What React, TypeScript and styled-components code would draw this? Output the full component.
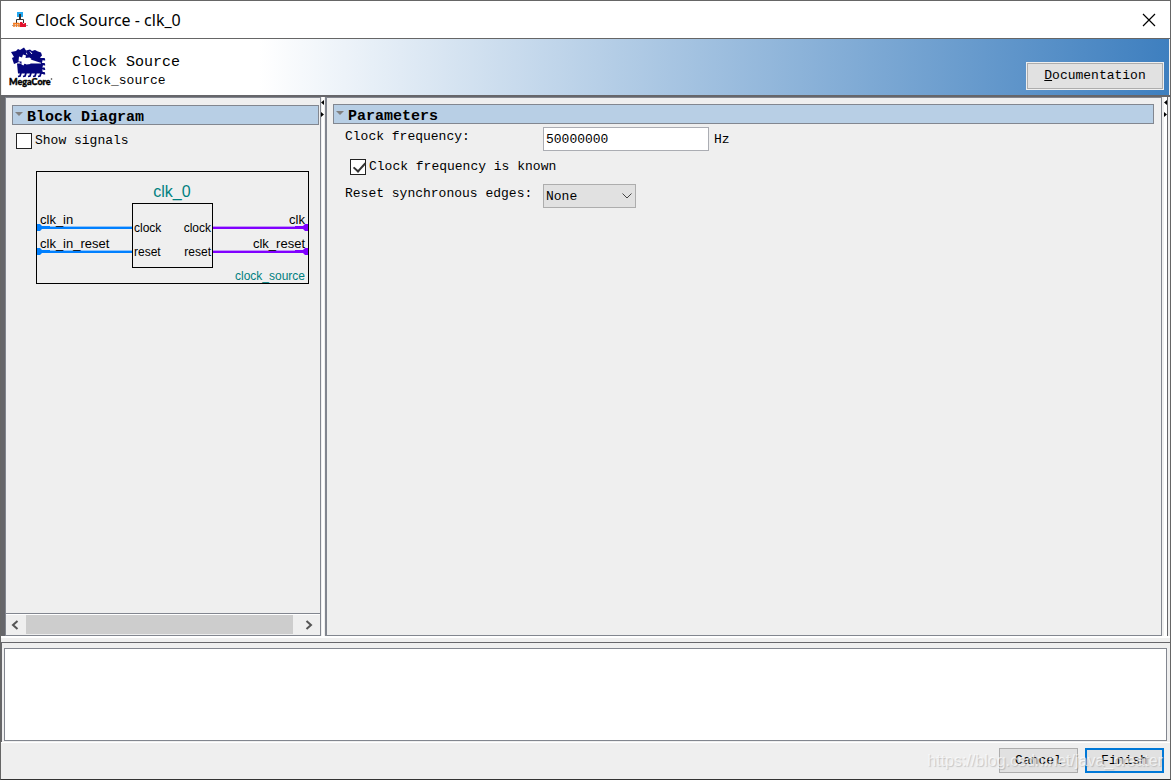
import React from "react";
import styled, { createGlobalStyle } from "styled-components";

const mono = '"Liberation Mono", "DejaVu Sans Mono", monospace';
const edge = "#82868f";
const face = "#efefef";
const dark = "#66666a";

const GlobalStyle = createGlobalStyle`
  * { box-sizing: border-box; }
  body { margin: 0; background: ${face}; }
  button, input, select, textarea { font: inherit; color: inherit; }
`;

const Window = styled.div`
  position: relative;
  display: flex;
  flex-direction: column;
  min-height: 100vh;
  border: 1px solid #666;
  border-bottom-color: #333;
  background: ${face};
  color: #000;
  font: 13px/16px ${mono};
`;

const TitleBar = styled.header`
  display: flex;
  align-items: center;
  gap: 6px;
  height: 38px;
  padding: 0 14px 0 10px;
  background: #fff;
  border-bottom: 1px solid #666;
`;

const WindowTitle = styled.h1`
  flex: 1;
  margin: 0;
  font: 400 16px/20px "Noto Sans", "Open Sans", sans-serif;
`;

const CloseButton = styled.button`
  display: flex;
  padding: 0;
  border: 0;
  background: none;
`;

const Banner = styled.section`
  display: flex;
  align-items: flex-start;
  height: 56px;
  margin: 0 1px;
  padding: 7px 6px 0 5px;
  background: linear-gradient(to right, #fff 22%, #3e7fbf 100%);
`;

const BannerText = styled.div`
  flex: 1;
  margin: 7px 0 0 17px;
`;

const ComponentName = styled.h2`
  margin: 0;
  font-size: 15px;
  line-height: 20px;
  font-weight: 400;
`;

const ComponentType = styled.p`
  margin: 0;
`;

const PushButton = styled.button<{ $primary?: boolean; $wide?: boolean }>`
  width: ${(p) => (p.$wide ? "136px" : "79px")};
  height: ${(p) => (p.$wide ? "26px" : "25px")};
  padding: 0;
  border: ${(p) => (p.$primary ? "2px solid #0078d7" : "1px solid #adadad")};
  background: #e1e1e1;
  line-height: 16px;
`;

const DocumentationSlot = styled.div`
  margin-top: 17px;
  button { outline: 1px solid #efefef; }
`;

const Workspace = styled.main`
  flex: 1;
  display: flex;
  padding-left: 3px;
  border-top: 2px solid ${dark};
  border-left: 1px solid ${dark};
  background: linear-gradient(to right, ${dark} 3px, ${face} 3px);
`;

const Pane = styled.section<{ $fixed?: boolean }>`
  display: flex;
  flex-direction: column;
  flex: ${(p) => (p.$fixed ? "0 0 316px" : "1")};
  min-width: 0;
  border: 1px solid ${edge};
  border-left-width: ${(p) => (p.$fixed ? "1px" : "2px")};
`;

const PaneBody = styled.div`
  flex: 1;
  padding: 7px 1px 0 6px;
`;

const ParameterBody = styled.div`
  flex: 1;
  padding: 6px 7px 0 6px;
`;

const SectionTitle = styled.h2`
  display: flex;
  gap: 4px;
  height: 20px;
  margin: 0;
  padding: 0 2px;
  border: 1px solid #828790;
  background: #b8cfe5;
  font-size: 15px;
  line-height: 24px;
  font-weight: 700;
  svg { margin-top: 6px; }
`;

const Splitter = styled.div`
  display: flex;
  flex-direction: column;
  gap: 5px;
  flex: 0 0 4px;
  padding-top: 2px;
  background: linear-gradient(to right, ${face} 1px, #fff 1px, #fff 3px, ${face} 3px);
`;

const RightEdge = styled(Splitter)`
  flex-basis: 8px;
  align-items: flex-end;
  padding-right: 2px;
  background: linear-gradient(to right, ${face} 2px, #fff 2px, #fff 5px, ${dark} 5px, ${dark} 6px, ${face} 6px);
`;

const CheckRow = styled.label`
  display: flex;
  align-items: center;
  gap: 3px;
  height: 18px;
`;

const CheckBox = styled.input`
  appearance: none;
  position: relative;
  width: 16px;
  height: 16px;
  margin: 0;
  border: 1px solid #222;
  background: #fff;
  &:checked::after {
    content: "";
    position: absolute;
    left: 5px;
    top: 0;
    width: 5px;
    height: 10px;
    border: solid #333;
    border-width: 0 2px 2px 0;
    transform: rotate(42deg);
  }
`;

const SignalOptions = styled.div`
  margin: 7px 0 0 4px;
`;

const DiagramFrame = styled.div`
  margin: 21px 0 0 24px;
  svg { display: block; }
`;

const ScrollBar = styled.div`
  display: grid;
  grid-template-columns: 20px 1fr 27px;
  height: 22px;
  padding: 1px 0;
  border-top: 1px solid ${edge};
  box-shadow: inset 0 1px #fff;
`;

const ScrollButton = styled.button`
  display: flex;
  align-items: center;
  justify-content: center;
  padding: 0 3px 0 0;
  border: 0;
  background: none;
  &:last-child { padding: 0 0 0 5px; }
`;

const ScrollThumb = styled.div`
  background: #cdcdcd;
`;

const Fields = styled.div`
  display: flex;
  flex-direction: column;
  gap: 7px;
  margin: 3px 0 0 12px;
`;

const KnownOption = styled.div`
  margin: 0 0 1px 5px;
`;

const FieldRow = styled.div`
  display: flex;
  label { width: 198px; padding-top: 2px; }
  span { margin: 5px 0 0 5px; }
`;

const TextField = styled.input`
  width: 166px;
  height: 24px;
  padding: 1px 2px 0;
  border: 1px solid #abadb3;
  background: #fff;
`;

const SelectBox = styled.div`
  display: grid;
  align-items: center;
  width: 93px;
  height: 24px;
  > * { grid-area: 1 / 1; }
  svg { justify-self: end; margin-right: 4px; pointer-events: none; }
`;

const Select = styled.select`
  appearance: none;
  width: 100%;
  height: 24px;
  padding: 2px 2px 0;
  border: 1px solid #adadad;
  border-radius: 0;
  background: #e1e1e1;
`;

const MessageArea = styled.section`
  margin-top: 6px;
  padding: 5px 2px 1px;
  border-top: 1px solid ${dark};
  box-shadow: inset 1px 0 ${dark}, 0 -4px ${face}, 0 -6px #fff;
`;

const Messages = styled.textarea`
  display: block;
  width: calc(100% - 2px);
  height: 93px;
  margin-left: 1px;
  padding: 4px;
  resize: none;
  border: 1px solid ${edge};
  background: #fff;
  outline: 0;
`;

const Footer = styled.footer`
  display: flex;
  justify-content: flex-end;
  gap: 7px;
  height: 37px;
  padding: 5px 6px 0;
  border-top: 1px solid #fff;
`;

const Watermark = styled.div`
  position: absolute;
  right: 7px;
  bottom: 8px;
  color: rgba(255, 255, 255, 0.65);
  text-shadow: 1px 1px 1px rgba(120, 120, 120, 0.35);
  font: 16px/20px "Liberation Sans", Arial, sans-serif;
  pointer-events: none;
`;

const DiagramText = styled.text<{ $size: number; $teal?: boolean }>`
  font-family: "Liberation Sans", Arial, sans-serif;
  font-size: ${(p) => p.$size}px;
  fill: ${(p) => (p.$teal ? "#008080" : "#000")};
`;

const AppIcon = () => (
  <svg width="18" height="18" viewBox="0 0 18 18" aria-hidden="true">
    <rect x="6" y="1" width="6" height="5" fill="#22a7f0" />
    <path d="M8.500 3v6M9.500 3v6M5.500 12V8.500h7V12" fill="none" stroke="#333" />
    <path d="M1 14.500h16" stroke="#aaa" />
    <path d="M3 16v-4M5.500 16v-4M8 16v-4M2 12.500h6" fill="none" stroke="#f47b20" strokeWidth="1.500" />
    <path d="M9 11h2l1.500 2 1.500-1h1v4H9z" fill="#e3122d" />
  </svg>
);

const MegaCoreLogo = () => (
  <svg width="48" height="43" viewBox="0 0 48 43" role="img" aria-label="MegaCore">
    <g fill="#06067c">
      <path d="M19 4.500 23 3.500 25 5l3-1 3 1.500 3 1 1 3-2 2 3 1.500-1 3.500 1 3-1 3 1 5H11l-1-10h26L22 13z" />
      <path d="M4 6 9 5l2-2 2 1 4-2.500L20 6l-1 2 3 1 1 4-5 2-3 3-3-2-5 2-2-6 2-1z" />
    </g>
    <path d="M12 10.500l3 1 1-3 3 1-.5 2.500 4-.5 2 1.500-2 2 1 3-4 .500-2-1-1 2-2-1v-3h-3z" fill="#fff" />
    <path d="M23 5.500l2 2.500" stroke="#fff" />
    <path d="M34 13h3l.5 1.500M34 18h3l.5 1.500M34 22.500h3l.5 1.500M34 27h3l.5 1.500M14 27l-1 3-2 .5M19 27l-1 3-2 .5M24 27l-1 3-2 .5M29 27l-1 3-2 .5M34 27l-1 3-2 .5" fill="none" stroke="#06067c" strokeWidth="1.800" />
    <text x="2" y="39" fontFamily="Lato, 'Liberation Sans', sans-serif" fontSize="9" fontWeight="900" fill="#000" stroke="#000" strokeWidth=".4">MegaCore</text>
    <circle cx="44.500" cy="33" r=".8" fill="#333" />
  </svg>
);

const Triangle = () => (
  <svg width="8" height="5" viewBox="0 0 8 5" aria-hidden="true">
    <path d="M0 0h8L4 4z" fill="#808080" />
  </svg>
);

const Arrow = ({ left }: { left?: boolean }) => (
  <svg width="4" height="7" viewBox="0 0 4 7" aria-hidden="true">
    <path d={left ? "M3 1v5L0 3.500z" : "M0 1v5l3-2.500z"} />
  </svg>
);

const Chevron = ({ left }: { left?: boolean }) => (
  <svg width="8" height="10" viewBox="0 0 8 10" aria-hidden="true">
    <path d={left ? "M6.500 1 2 5l4.500 4" : "M1.500 1 6 5 1.500 9"} fill="none" stroke="#555" strokeWidth="2" />
  </svg>
);

const BlockDiagram = () => (
  <svg width="273" height="113" viewBox="0 0 273 113" role="img" aria-label="Block diagram of clk_0">
    <g fill="none" stroke="#000">
      <rect x=".5" y=".5" width="272" height="112" />
      <rect x="96.500" y="32.500" width="80" height="64" />
    </g>
    {[57, 81].map((y) => (
      <g key={y}>
        <path d={`M4 ${y - 1.5}h92`} stroke="#8fc3fa" />
        <path d={`M4 ${y}h92`} stroke="#0080ff" strokeWidth="2" />
        <path d={`M1 ${y - 4}h3l2 2h8v3H6l-2 2H1z`} fill="#0080ff" />
        <path d={`M177 ${y - 1.5}h92`} stroke="#c394f7" />
        <path d={`M177 ${y}h92`} stroke="#8000ff" strokeWidth="2" />
        <path d={`M272 ${y - 4}h-3l-2 2h-8v3h8l2 2h3z`} fill="#8000ff" />
      </g>
    ))}
    <DiagramText $size={16} $teal x="136" y="26" textAnchor="middle">clk_0</DiagramText>
    <DiagramText $size={13} x="4" y="53">clk_in</DiagramText>
    <DiagramText $size={13} x="4" y="77">clk_in_reset</DiagramText>
    <DiagramText $size={13} x="269" y="53" textAnchor="end">clk</DiagramText>
    <DiagramText $size={13} x="269" y="77" textAnchor="end">clk_reset</DiagramText>
    <DiagramText $size={12} x="98" y="61">clock</DiagramText>
    <DiagramText $size={12} x="98" y="85">reset</DiagramText>
    <DiagramText $size={12} x="175" y="61" textAnchor="end">clock</DiagramText>
    <DiagramText $size={12} x="175" y="85" textAnchor="end">reset</DiagramText>
    <DiagramText $size={12} $teal x="269" y="109" textAnchor="end">clock_source</DiagramText>
  </svg>
);

export default function App() {
  return (
    <>
      <GlobalStyle />
      <Window>
        <TitleBar>
          <AppIcon />
          <WindowTitle>Clock Source - clk_0</WindowTitle>
          <CloseButton type="button" aria-label="Close">
            <svg width="14" height="14" viewBox="0 0 14 14">
              <path d="M1 1l12 12M13 1 1 13" stroke="#000" strokeWidth="1.200" />
            </svg>
          </CloseButton>
        </TitleBar>

        <Banner>
          <MegaCoreLogo />
          <BannerText>
            <ComponentName>Clock Source</ComponentName>
            <ComponentType>clock_source</ComponentType>
          </BannerText>
          <DocumentationSlot>
            <PushButton type="button" $wide><u>D</u>ocumentation</PushButton>
          </DocumentationSlot>
        </Banner>

        <Workspace>
          <Pane $fixed>
            <PaneBody>
              <SectionTitle><Triangle />Block Diagram</SectionTitle>
              <SignalOptions>
                <CheckRow>
                  <CheckBox type="checkbox" />
                  Show signals
                </CheckRow>
              </SignalOptions>
              <DiagramFrame><BlockDiagram /></DiagramFrame>
            </PaneBody>
            <ScrollBar>
              <ScrollButton type="button" aria-label="Scroll left"><Chevron left /></ScrollButton>
              <ScrollThumb />
              <ScrollButton type="button" aria-label="Scroll right"><Chevron /></ScrollButton>
            </ScrollBar>
          </Pane>
          <Splitter><Arrow left /><Arrow /></Splitter>
          <Pane>
            <ParameterBody>
              <SectionTitle><Triangle />Parameters</SectionTitle>
              <Fields>
                <FieldRow>
                  <label htmlFor="frequency">Clock frequency:</label>
                  <TextField id="frequency" type="text" defaultValue="50000000" />
                  <span>Hz</span>
                </FieldRow>
                <KnownOption>
                  <CheckRow>
                    <CheckBox type="checkbox" defaultChecked />
                    Clock frequency is known
                  </CheckRow>
                </KnownOption>
                <FieldRow>
                  <label htmlFor="edges">Reset synchronous edges:</label>
                  <SelectBox>
                    <Select id="edges" defaultValue="None">
                      <option>None</option>
                      <option>Both</option>
                      <option>Deassert</option>
                    </Select>
                    <svg width="10" height="6" viewBox="0 0 10 6" aria-hidden="true">
                      <path d="M.5.5 5 5 9.500.5" fill="none" stroke="#444" />
                    </svg>
                  </SelectBox>
                </FieldRow>
              </Fields>
            </ParameterBody>
          </Pane>
          <RightEdge><Arrow left /><Arrow /></RightEdge>
        </Workspace>

        <MessageArea>
          <Messages aria-label="Messages" readOnly />
        </MessageArea>

        <Footer>
          <PushButton type="button">Cancel</PushButton>
          <PushButton type="button" $primary>Finish</PushButton>
        </Footer>
        <Watermark>https://blog.csdn.net/java_creater</Watermark>
      </Window>
    </>
  );
}
